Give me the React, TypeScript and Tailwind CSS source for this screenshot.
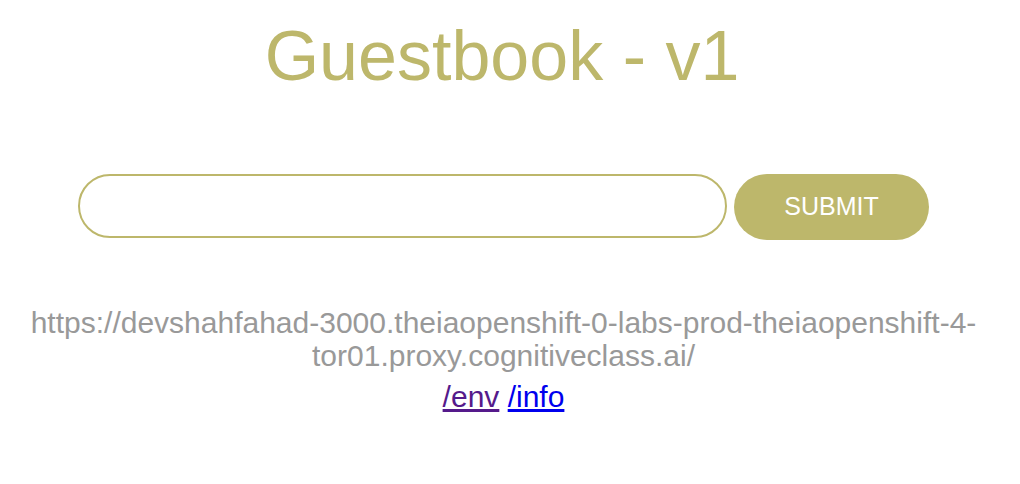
export default function App() {
  return (
    <div className="min-h-[484px] bg-white pr-[13px] font-['Liberation_Sans',Arial,sans-serif]">
      {/* Title */}
      <h1 className="pt-[16px] pr-[3px] text-center text-[70px] leading-[80px] text-[#bdb76b]">
        Guestbook - v1
      </h1>

      {/* Entry form */}
      <form
        className="mt-[78px] flex items-start justify-center gap-[7px]"
        onSubmit={(e) => e.preventDefault()}
      >
        <input
          type="text"
          className="h-16 w-[649px] rounded-full border-2 border-[#bdb76b] bg-white px-6 text-xl outline-none"
        />
        <button
          type="submit"
          className="h-[66px] w-[195px] rounded-full bg-[#bdb76b] text-[25px] text-white"
        >
          SUBMIT
        </button>
      </form>

      {/* Host + links */}
      <div className="mt-[66px] px-2 text-center text-[30px] leading-[33px] text-[#999999]">
        https://devshahfahad-3000.theiaopenshift-0-labs-prod-theiaopenshift-4-tor01.proxy.cognitiveclass.ai/
      </div>
      <div className="mt-[8px] text-center text-[30px] leading-[33px]">
        <a href="#env" className="text-[#551a8b] underline">/env</a>{" "}
        <a href="#info" className="text-[#0000ee] underline">/info</a>
      </div>
    </div>
  );
}
